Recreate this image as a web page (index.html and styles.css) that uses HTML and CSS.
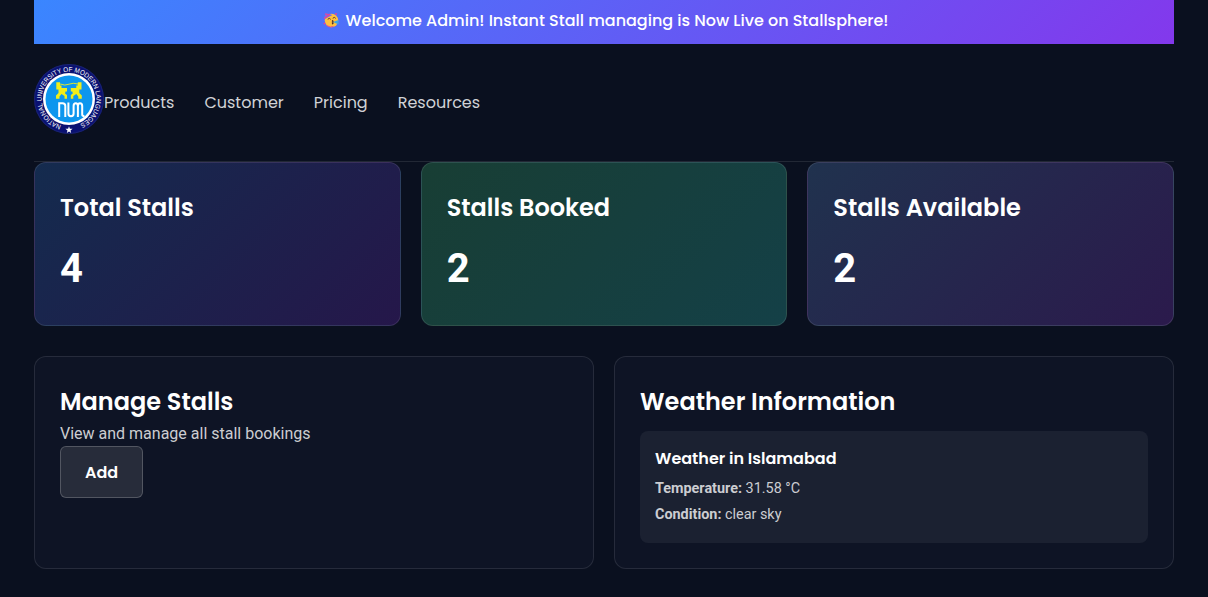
FILE: index.html
```html
<!DOCTYPE html>
<html lang="en">
<head>
<meta charset="utf-8">
<title>Stallsphere Admin</title>
<link rel="stylesheet" href="styles.css">
</head>
<body>
<div class="container">
  <div class="banner">
    <svg class="emoji" viewBox="0 0 32 32" aria-hidden="true">
      <circle cx="17" cy="17" r="13.500" fill="#ffc03d"/>
      <path d="M2 15 5 2 19 6Z" fill="#7a6fe8"/>
      <path d="M2 13 14 4M4 4l7 1" stroke="#e5429b" stroke-width="2.500"/>
      <path d="M10 14q3-3 5 0M20 12q3-3 5 0" fill="none" stroke="#5a3a32" stroke-width="2" stroke-linecap="round"/>
      <path d="M18 17q4 1 1 3 3 2-1 4" fill="none" stroke="#402a32" stroke-width="2.200"/>
      <path d="M20 20 31 16v9Z" fill="#3ba7e8"/>
      <circle cx="26" cy="4" r="2" fill="#e5429b"/>
      <circle cx="3" cy="23" r="2" fill="#e5429b"/>
      <path d="M7 27q8 5 14 2" fill="none" stroke="#e5528b" stroke-width="2"/>
    </svg>
    <span class="banner-text">Welcome Admin! Instant Stall managing is Now Live on Stallsphere!</span>
  </div>

  <header class="header">
    <svg class="logo" viewBox="0 0 70 70" role="img" aria-label="National University of Modern Languages">
      <defs>
        <path id="ring" d="M27.300 61.200A27.300 27.300 0 1 1 44 60.800"/>
      </defs>
      <circle cx="35" cy="35" r="35" fill="#0a1172"/>
      <circle cx="35" cy="35" r="34.500" fill="none" stroke="#202a70" stroke-width=".8"/>
      <circle cx="35" cy="35" r="26" fill="#fff"/>
      <circle cx="35" cy="35" r="23.500" fill="#0d96ee"/>
      <text class="logo-ring"><textPath href="#ring" textLength="152" lengthAdjust="spacingAndGlyphs">NATIONAL UNIVERSITY OF MODERN LANGUAGES</textPath></text>
      <path d="M35 62.200l.9 2.500 2.700.1-2.100 1.700.7 2.600-2.200-1.500-2.200 1.500.7-2.600-2.100-1.700 2.700-.1Z" fill="#fff"/>
      <g fill="#f2ee19">
        <path id="figure" d="M22.300 18.300H26V21.500H27.500V24H33V27.500H31.500L31 29.500 33 31V34.800H30.500V32L27.500 30 25.500 32.500V34.800H22V31.500L24.500 29V25.500H22.300Z"/>
        <use href="#figure" transform="matrix(-1 0 0 1 69.800 0)"/>
      </g>
      <path d="M26 20Q31 22 35 20.200T44 20" fill="none" stroke="#f2ee19" stroke-width=".9"/>
      <path d="M25.200 53V39.300H28.500Q31.300 39.300 31.300 42V53M34.400 38.500V49.500Q34.400 52.300 37 52.300Q39.600 52.300 39.600 49.500V42Q39.600 39.300 41.800 39.300Q43.900 39.300 43.900 42V53M43.900 42Q43.900 39.300 46 39.300Q48.200 39.300 48.200 42V50.500Q48.200 52.200 50.500 52.200" fill="none" stroke="#fff" stroke-width="2"/>
    </svg>
    <nav class="nav">
      <a class="nav-link">Products</a>
      <a class="nav-link">Customer</a>
      <a class="nav-link">Pricing</a>
      <a class="nav-link">Resources</a>
    </nav>
  </header>

  <main>
    <section class="stats">
      <article class="card stat stat-total"><h2 class="title">Total Stalls</h2><p class="value">4</p></article>
      <article class="card stat stat-booked"><h2 class="title">Stalls Booked</h2><p class="value">2</p></article>
      <article class="card stat stat-available"><h2 class="title">Stalls Available</h2><p class="value">2</p></article>
    </section>
    <section class="panels">
      <article class="card panel">
        <h2 class="title">Manage Stalls</h2>
        <p class="description">View and manage all stall bookings</p>
        <button class="button" type="button">Add</button>
      </article>
      <article class="card panel">
        <h2 class="title">Weather Information</h2>
        <div class="weather">
          <h3 class="weather-title">Weather in Islamabad</h3>
          <p class="weather-line"><strong>Temperature:</strong> 31.58 °C</p>
          <p class="weather-line"><strong>Condition:</strong> clear sky</p>
        </div>
      </article>
    </section>
  </main>
</div>
</body>
</html>
```
FILE: styles.css
```css
* { box-sizing: border-box; margin: 0; padding: 0; }
body {
  min-height: 597px;
  background: #0a101f;
  color: #fff;
  font-family: Roboto, sans-serif;
  font-size: 16px;
  overflow: hidden;
}
.container { width: 1140px; margin: 0 auto; }
.banner, .nav, .title, .button, .weather-title {
  font-family: Poppins, Inter, sans-serif;
}
.banner {
  display: flex;
  justify-content: center;
  align-items: center;
  gap: 7px;
  height: 44px;
  padding: 0 0 4px 3px;
  background: linear-gradient(135deg, #3a86ff, #8338ec);
  font-weight: 500;
}
.emoji { width: 16px; height: 16px; }
.header {
  display: flex;
  height: 118px;
  padding-top: 20px;
  border-bottom: 1px solid rgba(255, 255, 255, .1);
}
.logo { width: 70px; height: 70px; }
.logo-ring { font: 400 6.8px "Liberation Sans", sans-serif; fill: #fff; }
.nav { display: flex; gap: 30px; height: 77px; align-items: center; color: #d0d2d6; }
.stats { display: grid; grid-template-columns: repeat(3, 1fr); gap: 20px; }
.card { border: 1px solid rgba(255, 255, 255, .1); border-radius: 12px; padding: 25px; }
.stat { height: 164px; }
.stat-total { background: linear-gradient(135deg, #142b4e, #25174a); }
.stat-booked { background: linear-gradient(135deg, #183e34, #144047); }
.stat-available { background: linear-gradient(135deg, #20324e, #2b1a4c); }
.title { font-size: 24px; line-height: 40px; font-weight: 600; white-space: nowrap; }
.value { margin-top: 17px; font-size: 40px; line-height: 47px; font-weight: 700; }
.panels { display: grid; grid-template-columns: repeat(2, 1fr); gap: 20px; margin-top: 30px; }
.panel { height: 213px; background: #0e1425; }
.description { line-height: 24px; color: #cccdd1; }
.button {
  display: block;
  width: 83px;
  height: 52px;
  border: 1px solid rgba(255, 255, 255, .2);
  border-radius: 6px;
  background: #272c3a;
  color: #fff;
  font-size: 16px;
  font-weight: 600;
}
.weather { height: 112px; margin-top: 9px; padding: 15px; border-radius: 8px; background: #1b2131; }
.weather-title { margin-bottom: 7px; font-size: 16px; line-height: 25px; font-weight: 600; }
.weather-line { margin-bottom: 4px; font-size: 14.4px; line-height: 22px; color: #cccdd1; }
```
